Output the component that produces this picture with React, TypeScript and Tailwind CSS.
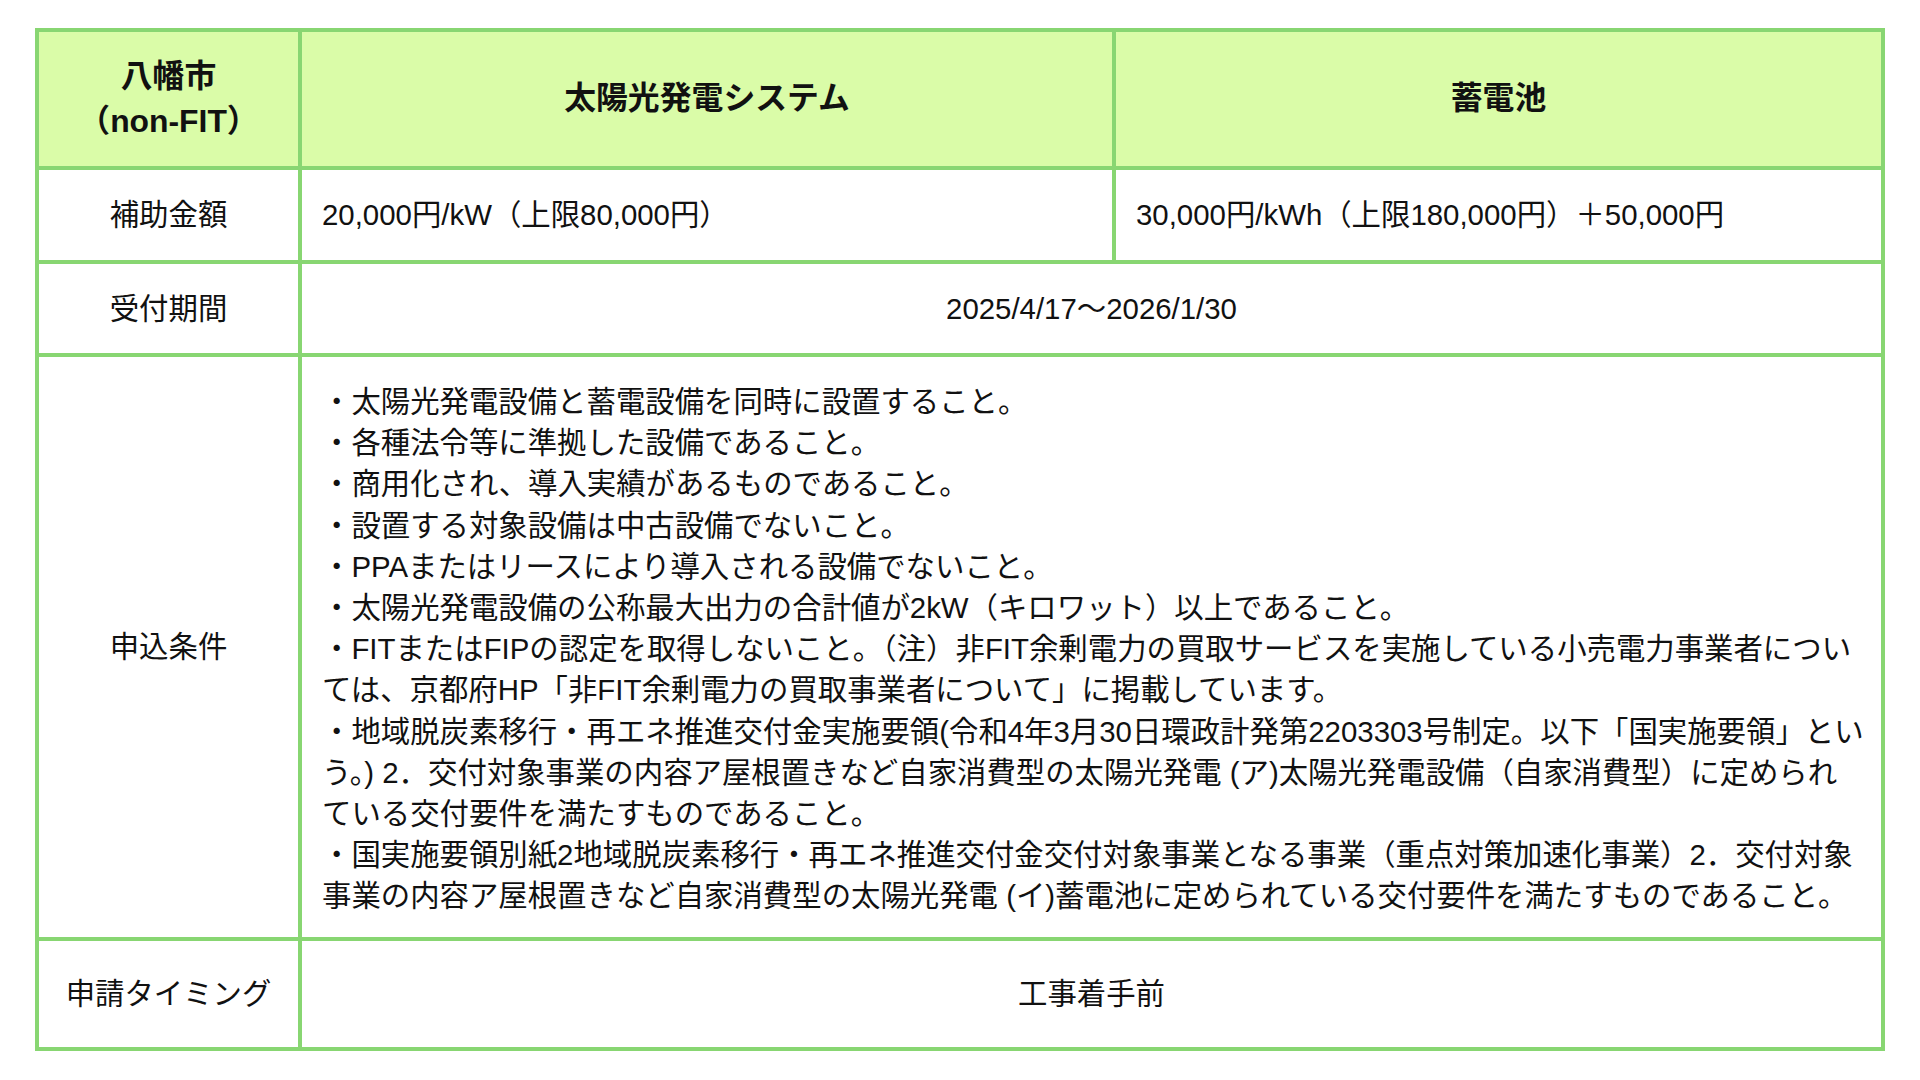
import React from "react";

const line = "border-[#88d672]";

// each item is split where the reference wraps
const conditions: string[][] = [
  ["・太陽光発電設備と蓄電設備を同時に設置すること。"],
  ["・各種法令等に準拠した設備であること。"],
  ["・商用化され、導入実績があるものであること。"],
  ["・設置する対象設備は中古設備でないこと。"],
  ["・PPAまたはリースにより導入される設備でないこと。"],
  ["・太陽光発電設備の公称最大出力の合計値が2kW（キロワット）以上であること。"],
  [
    "・FITまたはFIPの認定を取得しないこと。（注）非FIT余剰電力の買取サービスを実施している小売電力事業者につい",
    "ては、京都府HP「非FIT余剰電力の買取事業者について」に掲載しています。",
  ],
  [
    "・地域脱炭素移行・再エネ推進交付金実施要領(令和4年3月30日環政計発第2203303号制定。以下「国実施要領」とい",
    "う。) 2．交付対象事業の内容ア屋根置きなど自家消費型の太陽光発電 (ア)太陽光発電設備（自家消費型）に定められ",
    "ている交付要件を満たすものであること。",
  ],
  [
    "・国実施要領別紙2地域脱炭素移行・再エネ推進交付金交付対象事業となる事業（重点対策加速化事業）2．交付対象",
    "事業の内容ア屋根置きなど自家消費型の太陽光発電 (イ)蓄電池に定められている交付要件を満たすものであること。",
  ],
];

function App() {
  return (
    <div className="min-h-screen bg-white pl-[35px] pt-[28px] font-['Liberation_Sans','Noto_Sans_CJK_JP',sans-serif] text-[#111]">
      <div className={`grid w-[1850px] grid-cols-[263px_814px_769px] grid-rows-[138px_94px_93px_auto_110px] border-l-4 border-t-4 ${line}`}>
        {/* header */}
        <div className={`flex flex-col items-center justify-center border-b-4 border-r-4 ${line} bg-[#dafca8] text-[31.85px] font-bold leading-[44.6px]`}>
          <span>八幡市</span>
          <span>（non-FIT）</span>
        </div>
        <div className={`flex items-center justify-center border-b-4 border-r-4 ${line} bg-[#dafca8] text-[31.85px] font-bold`}>
          太陽光発電システム
        </div>
        <div className={`flex items-center justify-center border-b-4 border-r-4 ${line} bg-[#dafca8] text-[31.85px] font-bold`}>
          蓄電池
        </div>

        {/* 補助金額 */}
        <div className={`flex items-center justify-center border-b-4 border-r-4 ${line} text-[29.4px] leading-[41.2px]`}>
          補助金額
        </div>
        <div className={`flex items-center border-b-4 border-r-4 ${line} px-5 text-[29.4px] leading-[41.2px]`}>
          20,000円/kW（上限80,000円）
        </div>
        <div className={`flex items-center border-b-4 border-r-4 ${line} px-5 text-[29.4px] leading-[41.2px]`}>
          30,000円/kWh（上限180,000円）＋50,000円
        </div>

        {/* 受付期間 */}
        <div className={`flex items-center justify-center border-b-4 border-r-4 ${line} text-[29.4px] leading-[41.2px]`}>
          受付期間
        </div>
        <div className={`col-span-2 flex items-center justify-center border-b-4 border-r-4 ${line} text-[29.4px] leading-[41.2px]`}>
          2025/4/17〜2026/1/30
        </div>

        {/* 申込条件 */}
        <div className={`flex items-center justify-center border-b-4 border-r-4 ${line} text-[29.4px] leading-[41.2px]`}>
          申込条件
        </div>
        <div className={`col-span-2 border-b-4 border-r-4 ${line} pb-5 pl-5 pr-2 pt-6 text-[29.4px] leading-[41.2px]`}>
          {conditions.map((item) => (
            <p key={item[0]}>
              {item.map((l, i) => (
                <React.Fragment key={i}>
                  {i > 0 && <br />}
                  {l}
                </React.Fragment>
              ))}
            </p>
          ))}
        </div>

        {/* 申請タイミング */}
        <div className={`flex items-center justify-center border-b-4 border-r-4 ${line} text-[29.4px] leading-[41.2px]`}>
          申請タイミング
        </div>
        <div className={`col-span-2 flex items-center justify-center border-b-4 border-r-4 ${line} text-[29.4px] leading-[41.2px]`}>
          工事着手前
        </div>
      </div>
    </div>
  );
}

export default App;
